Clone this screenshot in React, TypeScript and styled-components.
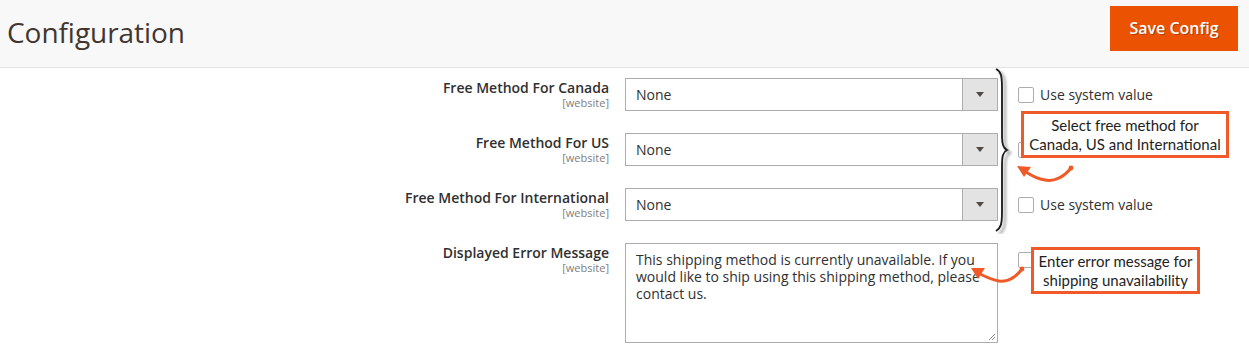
import React from 'react'
import styled, { createGlobalStyle } from 'styled-components'

const GlobalStyle = createGlobalStyle`
	body {
		margin: 0;
		background: #ffffff;
		font-family: 'Open Sans', 'Liberation Sans', sans-serif;
		color: #303030;
	}
`

const orange = '#f05a28'

type Field = {
	label: string
	kind: 'select' | 'textarea'
	value: string
	systemValue: boolean
}

const fields: Field[] = [
	{ label: 'Free Method For Canada', kind: 'select', value: 'None', systemValue: true },
	{ label: 'Free Method For US', kind: 'select', value: 'None', systemValue: false },
	{ label: 'Free Method For International', kind: 'select', value: 'None', systemValue: true },
	{
		label: 'Displayed Error Message',
		kind: 'textarea',
		value:
			'This shipping method is currently unavailable. If you would like to ship using this shipping method, please contact us.',
		systemValue: false
	}
]

export default function App() {
	return (
		<Page>
			<GlobalStyle />
			<Header>
				<Title>Configuration</Title>
				<SaveButton>Save Config</SaveButton>
			</Header>
			<Form>
				{fields.map(f => (
					<Row key={f.label}>
						<Label>
							<LabelText>{f.label}</LabelText>
							<Scope>[website]</Scope>
						</Label>
						{f.kind === 'select' ? (
							<Select>
								<SelectValue>{f.value}</SelectValue>
								<SelectArrow>
									<Caret />
								</SelectArrow>
							</Select>
						) : (
							<TextArea>
								{f.value}
								<Grip width="8" height="8" viewBox="0 0 8 8">
									<path d="M7 1 L1 7 M7 4 L4 7" stroke="#8a8a8a" strokeWidth="1" />
								</Grip>
							</TextArea>
						)}
						<SystemValue>
							<CheckBox />
							{f.systemValue && <span>Use system value</span>}
						</SystemValue>
					</Row>
				))}

				<Brace width="24" height="166" viewBox="0 0 24 166">
					<defs>
						<filter id="shadow" x="-50%" y="-10%" width="200%" height="120%">
							<feGaussianBlur in="SourceAlpha" stdDeviation="1.6" />
							<feOffset dx="3" dy="3" result="b" />
							<feComponentTransfer>
								<feFuncA type="linear" slope="0.45" />
							</feComponentTransfer>
							<feMerge>
								<feMergeNode />
								<feMergeNode in="SourceGraphic" />
							</feMerge>
						</filter>
					</defs>
					<path
						d="M2 1 C7 3 8 8 8 20 L8 66 C8 76 9 80 13 82 C9 84 8 88 8 98 L8 144 C8 156 7 160 2 163"
						fill="none"
						stroke="#1a1a1a"
						strokeWidth="1.8"
						filter="url(#shadow)"
					/>
				</Brace>

				<Note $left={1021} $top={43} $width={208}>
					Select free method for
					<br />
					Canada, US and International
				</Note>
				<Arrow $left={1012} $top={95} width="66" height="30" viewBox="0 0 66 30">
					<path
						d="M59 5 C52 14 42 19 33 17 C26 16 20 13 14 9"
						fill="none"
						stroke={orange}
						strokeWidth="3"
						strokeLinecap="round"
					/>
					<circle cx="59" cy="5" r="2.4" fill={orange} />
					<path d="M5 3 L19 4 L12 14 Z" fill={orange} />
				</Arrow>

				<Note $left={1031} $top={179} $width={169}>
					Enter error message for
					<br />
					shipping unavailability
				</Note>
				<Arrow $left={966} $top={196} width="62" height="30" viewBox="0 0 62 30">
					<path
						d="M56 5 C50 13 42 18 33 17 C26 16 20 13 14 10"
						fill="none"
						stroke={orange}
						strokeWidth="3"
						strokeLinecap="round"
					/>
					<circle cx="56" cy="5" r="2.4" fill={orange} />
					<path d="M5 4 L19 4 L12 15 Z" fill={orange} />
				</Arrow>
			</Form>
		</Page>
	)
}

const Page = styled.div`
	width: 1249px;
	height: 355px;
	overflow: hidden;
`

const Header = styled.header`
	display: flex;
	align-items: center;
	justify-content: space-between;
	height: 67px;
	padding: 0 11px 0 7px;
	background: #f8f8f8;
	border-bottom: 1px solid #e3e3e3;
`

const Title = styled.h1`
	margin: 0 0 3px;
	font-size: 28px;
	font-weight: 400;
	color: #41362f;
	letter-spacing: -0.05px;
`

const SaveButton = styled.button`
	height: 45px;
	width: 128px;
	margin-bottom: 11px;
	padding: 0;
	border: none;
	background: #eb5202;
	color: #ffffff;
	font-family: 'Open Sans', 'Liberation Sans', sans-serif;
	font-size: 16px;
	font-weight: 600;
	text-shadow: 1px 1px 0 rgba(0, 0, 0, 0.25);
`

const Form = styled.div`
	position: relative;
	padding-top: 10px;
`

const Row = styled.div`
	display: grid;
	grid-template-columns: 609px 373px 1fr;
	column-gap: 16px;
	margin-bottom: 22px;
	align-items: start;
`

const Label = styled.div`
	display: flex;
	flex-direction: column;
	align-items: flex-end;
	padding-top: 1px;
`

const LabelText = styled.span`
	font-size: 14px;
	font-weight: 600;
	line-height: 17px;
	color: #303030;
`

const Scope = styled.span`
	font-size: 11px;
	line-height: 13px;
	color: #808080;
`

const Select = styled.div`
	display: flex;
	height: 33px;
	box-sizing: border-box;
	border: 1px solid #adadad;
	background: #ffffff;
`

const SelectValue = styled.div`
	flex: 1;
	padding-left: 10px;
	font-size: 14px;
	line-height: 31px;
	color: #303030;
`

const SelectArrow = styled.div`
	width: 34px;
	display: flex;
	align-items: center;
	justify-content: center;
	background: #e3e3e3;
	border-left: 1px solid #adadad;
`

const Caret = styled.span`
	width: 0;
	height: 0;
	border-left: 4px solid transparent;
	border-right: 4px solid transparent;
	border-top: 5px solid #514943;
`

const TextArea = styled.div`
	position: relative;
	height: 100px;
	box-sizing: border-box;
	border: 1px solid #adadad;
	padding: 7px 12px 0 10px;
	font-size: 14px;
	line-height: 17px;
	color: #303030;
`

const Grip = styled.svg`
	position: absolute;
	right: 1px;
	bottom: 1px;
`

const SystemValue = styled.label`
	display: flex;
	align-items: center;
	gap: 6px;
	min-height: 17px;
	margin: 8px 0 0 4px;
	font-size: 14px;
	line-height: 17px;
	color: #303030;
`

const CheckBox = styled.span`
	width: 14px;
	height: 14px;
	border: 1px solid #adadad;
	border-radius: 2px;
	background: #ffffff;
`

const Brace = styled.svg`
	position: absolute;
	left: 994px;
	top: 0;
`

const Note = styled.div<{ $left: number; $top: number; $width: number }>`
	position: absolute;
	left: ${p => p.$left}px;
	top: ${p => p.$top}px;
	width: ${p => p.$width}px;
	box-sizing: border-box;
	padding: 2px 2px 1px;
	border: 3px solid ${orange};
	background: #ffffff;
	text-align: center;
	font-family: Lato, 'Liberation Sans', sans-serif;
	font-size: 15px;
	line-height: 19px;
	color: #1e1e1e;
	white-space: nowrap;
`

const Arrow = styled.svg<{ $left: number; $top: number }>`
	position: absolute;
	left: ${p => p.$left}px;
	top: ${p => p.$top}px;
`
